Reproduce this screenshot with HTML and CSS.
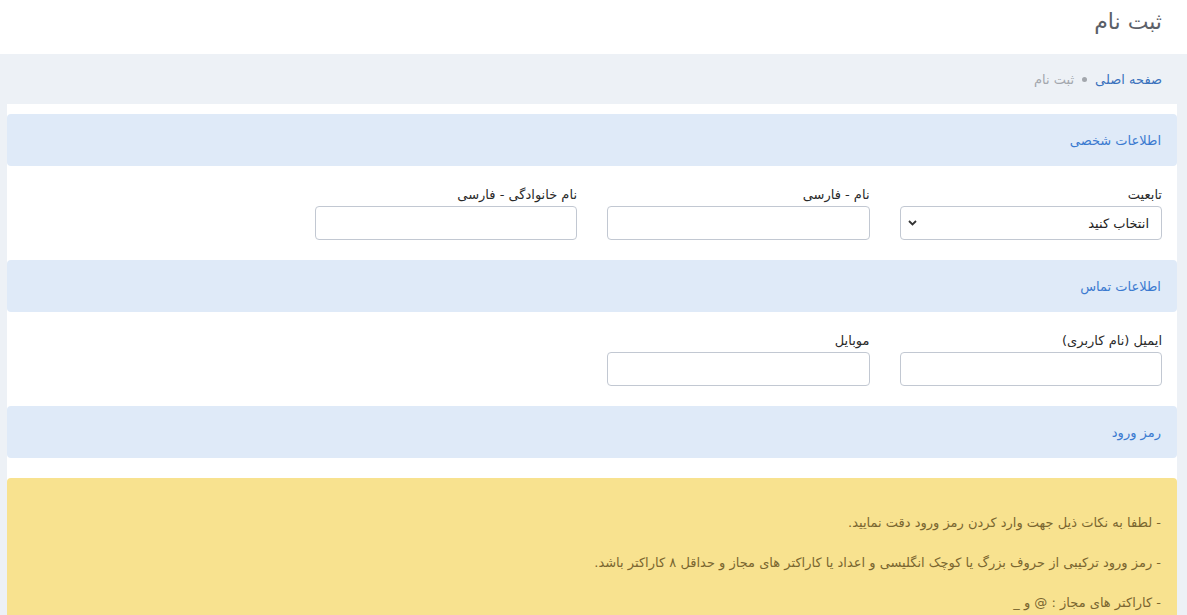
FILE: index.html
```html
<!DOCTYPE html>
<html lang="fa" dir="rtl">
<head>
<meta charset="utf-8">
<title>ثبت نام</title>
<link rel="stylesheet" href="styles.css">
</head>
<body>
<header class="page-head">
  <h1 class="page-title">ثبت نام</h1>
</header>
<div class="shell">
  <nav class="crumbs">
    <a class="crumb-link" href="#">صفحه اصلی</a>
    <span class="crumb-dot"></span>
    <span class="crumb-current">ثبت نام</span>
  </nav>
  <main class="panel">
    <div class="section-head">اطلاعات شخصی</div>
    <div class="row">
      <div class="field">
        <label class="label">تابعیت</label>
        <div class="select">
          <span>انتخاب کنید</span>
          <svg class="chev" width="9" height="6" viewBox="0 0 9 6"><path d="M1 1l3.5 3.5L8 1" fill="none" stroke="#333" stroke-width="1.8"/></svg>
        </div>
      </div>
      <div class="field">
        <label class="label">نام - فارسی</label>
        <div class="input"></div>
      </div>
      <div class="field">
        <label class="label">نام خانوادگی - فارسی</label>
        <div class="input"></div>
      </div>
    </div>
    <div class="section-head">اطلاعات تماس</div>
    <div class="row">
      <div class="field">
        <label class="label">ایمیل (نام کاربری)</label>
        <div class="input"></div>
      </div>
      <div class="field">
        <label class="label">موبایل</label>
        <div class="input"></div>
      </div>
    </div>
    <div class="section-head">رمز ورود</div>
    <div class="alert">
      <p>- لطفا به نکات ذیل جهت وارد کردن رمز ورود دقت نمایید.</p>
      <p>- رمز ورود ترکیبی از حروف بزرگ یا کوچک انگلیسی و اعداد یا کاراکتر های مجاز و حداقل ۸ کاراکتر باشد.</p>
      <p>- کاراکتر های مجاز : @ و _</p>
    </div>
  </main>
</div>
</body>
</html>
```

FILE: styles.css
```css
* { box-sizing: border-box; }
html, body { margin: 0; padding: 0; }
body {
  font-family: "DejaVu Sans", sans-serif;
  font-size: 13px;
  color: #333;
  background: #fff;
  direction: rtl;
  overflow: hidden;
}
.page-head {
  height: 54px;
  padding: 7px 25px 0 0;
  background: #fff;
}
.page-title {
  margin: 0;
  font-size: 22px;
  font-weight: normal;
  color: #5b6068;
  line-height: 30px;
}
.shell {
  background: #edf1f6;
  padding: 0 10px 0 7px;
  min-height: 600px;
}
.crumbs {
  height: 50px;
  display: flex;
  align-items: center;
  gap: 8px;
  padding: 0 15px 0 0;
  font-size: 13px;
}
.crumb-link { color: #3a72bd; text-decoration: none; }
.crumb-dot { width: 5px; height: 5px; border-radius: 50%; background: #a3a7ad; }
.crumb-current { color: #a3a7ad; }
.panel {
  background: #fff;
  padding-top: 10px;
}
.section-head {
  background: #dfeaf8;
  border-radius: 4px;
  height: 52px;
  display: flex;
  align-items: center;
  padding: 0 16px;
  color: #3b7ad0;
  font-size: 13px;
}
.row {
  display: grid;
  grid-template-columns: repeat(4, 1fr);
  padding: 20px 0 20px;
}
.field {
  padding: 0 15px;
  display: flex;
  flex-direction: column;
}
.label {
  font-size: 13px;
  color: #2a2a2a;
  line-height: 18px;
  height: 20px;
}
.input, .select {
  height: 34px;
  border: 1px solid #c2c8d2;
  border-radius: 4px;
  background: #fff;
}
.select {
  display: flex;
  align-items: center;
  justify-content: space-between;
  padding: 0 12px 0 7px;
  color: #222;
}
.chev { display: block; }
.alert {
  margin-top: 20px;
  background: #f8e28f;
  border-radius: 4px;
  padding: 35px 16px 10px;
  color: #7a6630;
  font-size: 13px;
}
.alert p { margin: 0 0 21px; line-height: 19px; }
```
